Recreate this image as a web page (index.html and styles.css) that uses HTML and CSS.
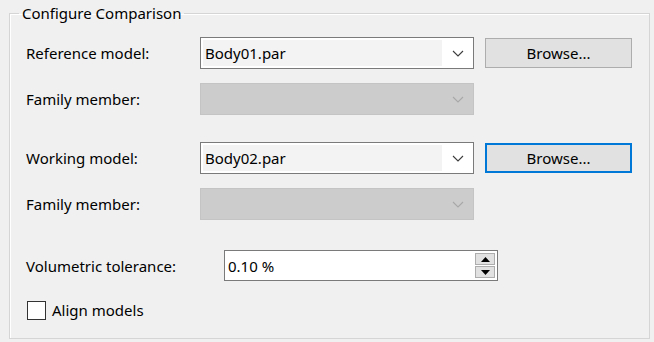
FILE: index.html
```
<!DOCTYPE html>
<html lang="en">
<head>
    <meta charset="UTF-8">
    <title>Configure Comparison</title>
    <link rel="stylesheet" href="styles.css">
</head>
<body>

<fieldset class="group">
    <legend>Configure Comparison</legend>

    <div class="row row-model">
        <label class="label">Reference model:</label>
        <div class="combo">
            <span class="combo-text">Body01.par</span>
            <svg class="chevron" width="12" height="7" viewBox="0 0 12 7"><path d="M1 1 L6 6 L11 1" fill="none" stroke="#3c3c3c" stroke-width="1.1"/></svg>
        </div>
        <button class="browse">Browse...</button>
    </div>

    <div class="row row-family">
        <label class="label">Family member:</label>
        <div class="combo disabled">
            <span class="combo-text"></span>
            <svg class="chevron" width="12" height="7" viewBox="0 0 12 7"><path d="M1 1 L6 6 L11 1" fill="none" stroke="#a8a8a8" stroke-width="1.1"/></svg>
        </div>
    </div>

    <div class="row row-model second">
        <label class="label">Working model:</label>
        <div class="combo">
            <span class="combo-text">Body02.par</span>
            <svg class="chevron" width="12" height="7" viewBox="0 0 12 7"><path d="M1 1 L6 6 L11 1" fill="none" stroke="#3c3c3c" stroke-width="1.1"/></svg>
        </div>
        <button class="browse focused">Browse...</button>
    </div>

    <div class="row row-family">
        <label class="label">Family member:</label>
        <div class="combo disabled">
            <span class="combo-text"></span>
            <svg class="chevron" width="12" height="7" viewBox="0 0 12 7"><path d="M1 1 L6 6 L11 1" fill="none" stroke="#a8a8a8" stroke-width="1.1"/></svg>
        </div>
    </div>

    <div class="row row-tolerance">
        <label class="label wide">Volumetric tolerance:</label>
        <div class="spin">
            <span class="spin-text">0.10 %</span>
            <div class="spin-buttons">
                <span class="spin-btn"><svg width="9" height="5" viewBox="0 0 9 5"><path d="M4.5 0 L9 5 L0 5 Z" fill="#000"/></svg></span>
                <span class="spin-btn"><svg width="9" height="5" viewBox="0 0 9 5"><path d="M0 0 L9 0 L4.5 5 Z" fill="#000"/></svg></span>
            </div>
        </div>
    </div>

    <div class="row row-check">
        <span class="checkbox"></span>
        <span class="check-label">Align models</span>
    </div>
</fieldset>

</body>
</html>
```

FILE: styles.css
```
        html, body {
            background: #f0f0f0;
        }
        body {
            margin: 0;
            padding: 3px 4px 0 9px;
            font-family: "Noto Sans", "Open Sans", sans-serif;
            font-size: 15px;
            color: #000;
        }
        .group {
            width: 641px;
            height: 336px;
            margin: 0;
            padding: 0;
            box-sizing: border-box;
            border: 1px solid #d5d5d5;
            box-shadow: inset 1px 1px 0 #fff;
        }
        .group legend {
            margin-left: 9px;
            padding: 0 3px;
            line-height: 20px;
        }
        .row {
            display: flex;
            align-items: center;
            padding-left: 16px;
        }
        .label {
            width: 174px;
            flex: none;
        }
        .label.wide {
            width: 198px;
        }
        .row-model {
            height: 32px;
            margin-top: 14px;
        }
        .row-model.second {
            margin-top: 27px;
        }
        .row-family {
            height: 32px;
            margin-top: 14px;
        }
        .combo {
            width: 274px;
            height: 32px;
            box-sizing: border-box;
            border: 1px solid #7a7a7a;
            background: #fff;
            display: flex;
            align-items: center;
            padding: 2px;
        }
        .combo-text {
            flex: 1;
            align-self: stretch;
            background: #f3f3f3;
            padding-left: 2px;
            line-height: 26px;
        }
        .chevron {
            margin: 0 7px 0 10px;
        }
        .combo.disabled {
            background: #cccccc;
            border-color: #c4c4c4;
        }
        .combo.disabled .combo-text {
            background: #cccccc;
        }
        .browse {
            margin-left: 11px;
            width: 147px;
            height: 30px;
            box-sizing: border-box;
            background: #e1e1e1;
            border: 1px solid #adadad;
            font: inherit;
            color: #000;
            padding: 0;
        }
        .browse.focused {
            border: 2px solid #0078d7;
        }
        .row-tolerance {
            height: 31px;
            margin-top: 30px;
        }
        .spin {
            width: 274px;
            height: 31px;
            box-sizing: border-box;
            border: 1px solid #7a7a7a;
            background: #fff;
            display: flex;
            align-items: center;
            padding: 2px 2px 2px 3px;
        }
        .spin-text {
            flex: 1;
        }
        .spin-buttons {
            display: flex;
            flex-direction: column;
            gap: 1px;
            align-self: stretch;
        }
        .spin-btn {
            flex: 1;
            width: 20px;
            box-sizing: border-box;
            background: #e1e1e1;
            border: 1px solid #adadad;
            display: flex;
            align-items: center;
            justify-content: center;
        }
        .row-check {
            height: 20px;
            margin-top: 19px;
            padding-left: 17px;
        }
        .checkbox {
            width: 19px;
            height: 19px;
            box-sizing: border-box;
            border: 1px solid #333;
            background: #fff;
        }
        .check-label {
            margin-left: 6px;
        }
```
